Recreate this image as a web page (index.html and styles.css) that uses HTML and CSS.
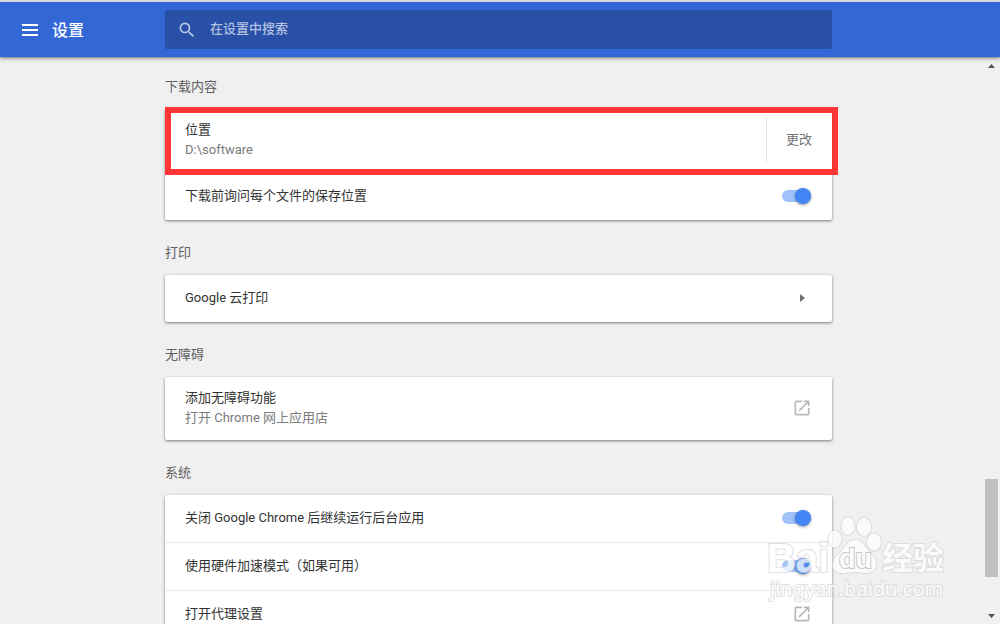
FILE: index.html
```html
<!DOCTYPE html>
<html lang="zh-CN">
<head>
<meta charset="utf-8">
<title>设置</title>
<link rel="stylesheet" href="styles.css">
</head>
<body>
<svg class="symbols" aria-hidden="true">
  <symbol id="open" viewBox="0 0 24 24"><path d="M19 19H5V5h7V3H5a2 2 0 0 0-2 2v14a2 2 0 0 0 2 2h14c1.100 0 2-.9 2-2v-7h-2v7zM14 3v2h3.590l-9.830 9.830 1.410 1.410L19 6.410V10h2V3h-7z"/></symbol>
</svg>
<header class="toolbar">
  <div class="brand">
    <button class="icon-button menu" type="button" aria-label="主菜单">
      <svg viewBox="0 0 16 12" width="16" height="12"><path d="M0 0h16v2H0zM0 5h16v2H0zM0 10h16v2H0z"/></svg>
    </button>
    <h1 class="title">设置</h1>
  </div>
  <label class="search">
    <svg viewBox="0 0 24 24" width="20" height="20" aria-hidden="true"><path d="M15.500 14h-.79l-.28-.27A6.471 6.471 0 0 0 16 9.500 6.500 6.500 0 1 0 9.500 16c1.610 0 3.090-.59 4.230-1.570l.27.28v.79l5 4.990L20.490 19l-4.990-5zm-6 0C7.010 14 5 11.990 5 9.500S7.010 5 9.500 5 14 7.010 14 9.500 11.990 14 9.500 14z"/></svg>
    <input class="search-input" type="text" placeholder="在设置中搜索" aria-label="在设置中搜索">
  </label>
</header>
<div class="body">
  <main class="content">
    <section class="section">
      <h2 class="heading">下载内容</h2>
      <div class="card">
        <div class="row tall marked">
          <div class="text"><span>位置</span><span class="sub">D:\software</span></div>
          <button class="change" type="button">更改</button>
        </div>
        <div class="row">
          <label class="text" for="ask">下载前询问每个文件的保存位置</label>
          <input class="toggle" id="ask" type="checkbox" checked>
        </div>
      </div>
    </section>
    <section class="section">
      <h2 class="heading">打印</h2>
      <div class="card">
        <a class="row" href="#print">
          <span class="text">Google 云打印</span>
          <span class="end"><svg class="arrow" viewBox="0 0 5 8" width="5" height="8"><path d="M0 0l5 4-5 4z"/></svg></span>
        </a>
      </div>
    </section>
    <section class="section">
      <h2 class="heading">无障碍</h2>
      <div class="card">
        <a class="row tall" href="#store">
          <span class="text"><span>添加无障碍功能</span><span class="sub">打开 Chrome 网上应用店</span></span>
          <span class="end"><svg class="open" width="20" height="20"><use href="#open"/></svg></span>
        </a>
      </div>
    </section>
    <section class="section">
      <h2 class="heading">系统</h2>
      <div class="card">
        <div class="row">
          <label class="text" for="background">关闭 Google Chrome 后继续运行后台应用</label>
          <input class="toggle" id="background" type="checkbox" checked>
        </div>
        <div class="row">
          <label class="text" for="hardware">使用硬件加速模式（如果可用）</label>
          <input class="toggle" id="hardware" type="checkbox" checked>
        </div>
        <a class="row" href="#proxy">
          <span class="text">打开代理设置</span>
          <span class="end"><svg class="open" width="20" height="20"><use href="#open"/></svg></span>
        </a>
      </div>
    </section>
  </main>
  <div class="scrollbar" aria-hidden="true">
    <svg viewBox="0 0 7 4" width="7" height="4"><path d="M0 4l3.500-4L7 4z"/></svg>
    <div class="track"><div class="thumb"></div></div>
    <svg viewBox="0 0 7 4" width="7" height="4"><path d="M0 0l3.500 4L7 0z"/></svg>
  </div>
</div>
<svg class="watermark" viewBox="0 0 184 92" width="184" height="92" aria-hidden="true">
  <g class="wm-shape">
    <text class="wm-latin" x="2" y="60">Bai</text>
    <ellipse cx="70" cy="27" rx="6.500" ry="8.500"/>
    <ellipse cx="83" cy="14" rx="6.500" ry="9"/>
    <ellipse cx="99" cy="15" rx="7" ry="9"/>
    <ellipse cx="109" cy="30" rx="7" ry="8.500"/>
    <path d="M90 28c6 0 9 5 12 9 4 5 10 9 9 16-1 6-5 8-10 8-4 0-7-1-11-1s-7 1-11 1c-6 0-11-2-11-8 0-8 7-11 10-16 3-4 6-9 12-9z"/>
    <text class="wm-cjk" x="117" y="57">经验</text>
    <text class="wm-url" x="5" y="84">jingyan.baidu.com</text>
  </g>
  <text class="wm-du" x="74" y="56">du</text>
</svg>
</body>
</html>
```
FILE: styles.css
```css
* { box-sizing: border-box; }

body {
  margin: 0;
  height: 100vh;
  display: flex;
  flex-direction: column;
  overflow: hidden;
  background: #f0f0f0;
  color: #333;
  font: 13px/20px Roboto, "Noto Sans CJK SC", sans-serif;
}

button, input { font: inherit; }
.symbols { position: absolute; width: 0; height: 0; }

.toolbar {
  position: relative;
  flex: none;
  display: flex;
  padding: 8px 168px 8px 0;
  border-top: 2px solid #d3d7df;
  background: #3367d6;
  box-shadow: 0 1px 4px rgba(0, 0, 0, .55);
}

.brand {
  flex: none;
  width: 165px;
  display: flex;
  align-items: center;
  gap: 14px;
  padding-left: 22px;
  color: #fff;
}

.icon-button {
  display: flex;
  padding: 0;
  border: 0;
  background: none;
  fill: #fff;
}

.title { margin: 0; padding-top: 3px; font-size: 16px; font-weight: 500; }

.search {
  flex: 1;
  display: flex;
  align-items: center;
  gap: 13px;
  height: 39px;
  padding: 0 12px;
  border-radius: 2px;
  background: #2850a7;
  fill: #b9c7e6;
}

.search-input {
  flex: 1;
  min-width: 0;
  padding: 0 0 2px;
  border: 0;
  outline: 0;
  background: none;
  color: #fff;
}

.search-input::placeholder { color: #b4c2e3; font-weight: 500; opacity: 1; }

.body { flex: 1; min-height: 0; display: flex; }

.content {
  flex: 1;
  min-width: 0;
  overflow: hidden;
  padding: 0 151px 0 165px;
}

.heading {
  margin: 0;
  padding: 25px 0 14px;
  color: #5f6062;
  font-size: 13px;
  font-weight: 400;
  line-height: 16px;
}

.section:first-child .heading { padding-top: 22px; }

.card {
  border-radius: 2px;
  background: #fff;
  box-shadow: 0 1px 3px rgba(0, 0, 0, .5);
}

.row {
  position: relative;
  display: flex;
  align-items: center;
  justify-content: space-between;
  min-height: 47px;
  padding: 0 20px 2px;
  color: inherit;
  text-decoration: none;
}

.row.tall { min-height: 63px; }
.row + .row { border-top: 1px solid #e9e9e9; min-height: 48px; }
.text { display: flex; flex-direction: column; }
.sub { color: #7b7b7b; }

.marked::after {
  content: "";
  position: absolute;
  inset: -2px -6px -3px 0;
  border: 6px solid #ff3536;
  pointer-events: none;
  z-index: 1;
}

.change {
  height: 45px;
  padding: 0 0 0 19px;
  border: 0;
  border-left: 1px solid #e6e6e6;
  background: none;
  color: #757575;
}

.toggle {
  appearance: none;
  display: flex;
  align-items: center;
  justify-content: flex-end;
  width: 29px;
  height: 12px;
  margin: 0 1px 0 0;
  border-radius: 6px;
  background: #a0c2f9;
}

.toggle::before {
  content: "";
  width: 16px;
  height: 16px;
  flex: none;
  border-radius: 50%;
  background: #4285f4;
  box-shadow: 0 1px 3px rgba(0, 0, 0, .4);
}

.end { display: flex; justify-content: center; width: 20px; }
.arrow { fill: #6e6e6e; }
.open { fill: #b8b8b8; }

.scrollbar {
  flex: none;
  width: 17px;
  display: flex;
  flex-direction: column;
  align-items: center;
  padding: 7px 0 6px;
  fill: #505050;
}

.track {
  flex: 1;
  width: 13px;
  display: flex;
  flex-direction: column;
}

.track::before { content: ""; flex: 11; }
.track::after { content: ""; flex: 1; }
.thumb { height: 98px; background: #c1c1c1; }

.watermark {
  position: absolute;
  right: 51px;
  bottom: 20px;
  z-index: 2;
  pointer-events: none;
  opacity: .75;
}

.wm-shape {
  fill: #fff;
  stroke: #d6d6d6;
  stroke-width: 2px;
  paint-order: stroke;
}

.wm-latin { font: 700 40px "Liberation Sans", sans-serif; }
.wm-cjk { font: 700 31px "Noto Sans CJK SC", sans-serif; }
.wm-url { font: 400 20px "Noto Sans", sans-serif; }
.wm-du { font: 700 27px "Liberation Sans", sans-serif; fill: #fff; stroke: #bbb; stroke-width: 2px; paint-order: stroke; }
```
